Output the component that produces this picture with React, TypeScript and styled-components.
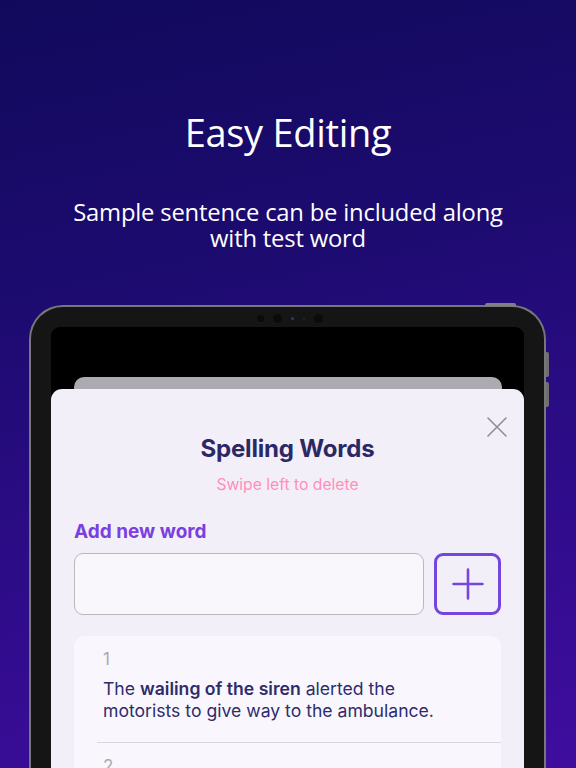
import React from 'react';
import styled, { createGlobalStyle } from 'styled-components';

const GlobalStyle = createGlobalStyle`
  html, body {
    margin: 0;
    padding: 0;
  }
  body {
    width: 576px;
    height: 768px;
    overflow: hidden;
  }
`;

const Page = styled.div`
  width: 576px;
  height: 768px;
  overflow: hidden;
  background: linear-gradient(168deg, #110a5c 0%, #1d0b70 35%, #2d0c88 65%, #3f0d9f 100%);
  font-family: 'Open Sans', 'Noto Sans', sans-serif;
`;

const Header = styled.header`
  display: flex;
  flex-direction: column;
  align-items: center;
  padding-top: 109px;
  color: #ffffff;
  text-align: center;
`;

const Title = styled.h1`
  margin: 0;
  font-size: 38px;
  line-height: 46px;
  font-weight: 400;
  letter-spacing: -0.3px;
`;

const Subtitle = styled.p`
  margin: 44px 0 0;
  width: 470px;
  font-size: 23.8px;
  line-height: 26px;
  font-weight: 400;
  letter-spacing: -0.2px;
`;

const Device = styled.div`
  position: relative;
  margin: 54px 0 0 29px;
  width: 517px;
  height: 520px;
  box-sizing: border-box;
  padding: 20px 20px 0 20px;
  background: #151515;
  border: 2px solid #77777a;
  border-bottom: none;
  border-radius: 34px 34px 0 0;
`;

const TopButton = styled.div`
  position: absolute;
  top: -4px;
  right: 28px;
  width: 31px;
  height: 3px;
  border-radius: 2px 2px 0 0;
  background: #808084;
`;

const SideButton = styled.div<{ $top: number; $h: number }>`
  position: absolute;
  right: -5px;
  top: ${(p) => p.$top}px;
  width: 3px;
  height: ${(p) => p.$h}px;
  border-radius: 0 2px 2px 0;
  background: #6f6f73;
`;

const Sensors = styled.div`
  position: absolute;
  top: 7px;
  left: 50%;
  transform: translateX(-50%);
  margin-left: 2px;
  display: flex;
  align-items: center;
  gap: 9px;
`;

const Dot = styled.span<{ $size: number; $color?: string }>`
  width: ${(p) => p.$size}px;
  height: ${(p) => p.$size}px;
  border-radius: 50%;
  background: ${(p) => p.$color || '#0b0b0b'};
`;

const Screen = styled.div`
  height: 100%;
  background: #000000;
  border-radius: 9px 9px 0 0;
  padding-top: 50px;
  box-sizing: border-box;
  display: flex;
  flex-direction: column;
  overflow: hidden;
`;

const BackSheet = styled.div`
  flex-shrink: 0;
  margin: 0 22px 0 23px;
  height: 12px;
  background: #adaab1;
  border-radius: 10px 10px 0 0;
`;

const Sheet = styled.div`
  position: relative;
  flex: 1;
  min-height: 0;
  background: #f3eff9;
  border-radius: 11px 11px 0 0;
  padding: 46px 23px 0;
  font-family: Inter, 'Noto Sans', sans-serif;
`;

const CloseButton = styled.button`
  position: absolute;
  top: 27px;
  right: 16px;
  width: 22px;
  height: 22px;
  padding: 0;
  border: none;
  background: none;
  display: flex;
  align-items: center;
  justify-content: center;
`;

const SheetTitle = styled.h2`
  margin: 0;
  text-align: center;
  font-size: 24px;
  line-height: 28px;
  font-weight: 700;
  color: #2a2966;
  letter-spacing: -0.2px;
`;

const Hint = styled.p`
  margin: 12px 0 0;
  text-align: center;
  font-size: 15.7px;
  line-height: 20px;
  color: #ff8fb8;
`;

const Label = styled.h3`
  margin: 25px 0 0;
  font-size: 19px;
  line-height: 24px;
  font-weight: 700;
  color: #7a3fe0;
`;

const AddRow = styled.div`
  display: flex;
  gap: 10px;
  margin-top: 9px;
`;

const WordInput = styled.input`
  flex: 1;
  height: 62px;
  box-sizing: border-box;
  border: 1.5px solid #bbb8bf;
  border-radius: 9px;
  background: #f9f7fc;
  font-family: inherit;
  font-size: 17px;
  padding: 0 14px;
  outline: none;
`;

const PlusButton = styled.button`
  width: 67px;
  height: 62px;
  box-sizing: border-box;
  border: 3px solid #7446dd;
  border-radius: 9px;
  background: #f3eff9;
  display: flex;
  align-items: center;
  justify-content: center;
  padding: 0;
`;

const List = styled.ul`
  list-style: none;
  margin: 21px 0 0;
  padding: 0;
  background: #f9f7fd;
  border-radius: 11px 11px 0 0;
`;

const Item = styled.li<{ $divider?: boolean }>`
  padding: 12px 20px 21px 29px;
  position: relative;
  ${(p) =>
    p.$divider &&
    `
    &::after {
      content: '';
      position: absolute;
      left: 23px;
      right: 0;
      bottom: 0;
      height: 1px;
      background: #d9d7dd;
    }
  `}
`;

const Index = styled.div`
  font-size: 17px;
  line-height: 22px;
  color: #a9a9ad;
`;

const Sentence = styled.p`
  margin: 8px 0 0;
  font-size: 17.6px;
  line-height: 22px;
  color: #2d2c6c;
  b {
    font-weight: 600;
  }
`;

const items = [
  {
    n: 1,
    content: (
      <>
        The <b>wailing of the siren</b> alerted the
        <br />
        motorists to give way to the ambulance.
      </>
    ),
  },
  { n: 2, content: <>&nbsp;</> },
];

const App = () => {
  return (
    <Page>
      <GlobalStyle />
      <Header>
        <Title>Easy Editing</Title>
        <Subtitle>Sample sentence can be included along with test word</Subtitle>
      </Header>
      <Device>
        <TopButton />
        <SideButton $top={45} $h={25} />
        <SideButton $top={75} $h={25} />
        <Sensors>
          <Dot $size={7} />
          <Dot $size={9} />
          <Dot $size={3} $color="#1d3f80" />
          <Dot $size={2} $color="#262626" />
          <Dot $size={9} />
        </Sensors>
        <Screen>
          <BackSheet />
          <Sheet>
            <CloseButton aria-label="close">
              <svg width="20" height="20" viewBox="0 0 20 20">
                <path d="M1 1L19 19M19 1L1 19" stroke="#8e8e93" strokeWidth="1.6" strokeLinecap="round" />
              </svg>
            </CloseButton>
            <SheetTitle>Spelling Words</SheetTitle>
            <Hint>Swipe left to delete</Hint>
            <Label>Add new word</Label>
            <AddRow>
              <WordInput />
              <PlusButton aria-label="add">
                <svg width="32" height="32" viewBox="0 0 32 32">
                  <path d="M16 1.5V30.5M1.5 16H30.5" stroke="#7446dd" strokeWidth="2.6" strokeLinecap="round" />
                </svg>
              </PlusButton>
            </AddRow>
            <List>
              {items.map((it, i) => (
                <Item key={it.n} $divider={i === 0}>
                  <Index>{it.n}</Index>
                  <Sentence>{it.content}</Sentence>
                </Item>
              ))}
            </List>
          </Sheet>
        </Screen>
      </Device>
    </Page>
  );
};

export default App;
